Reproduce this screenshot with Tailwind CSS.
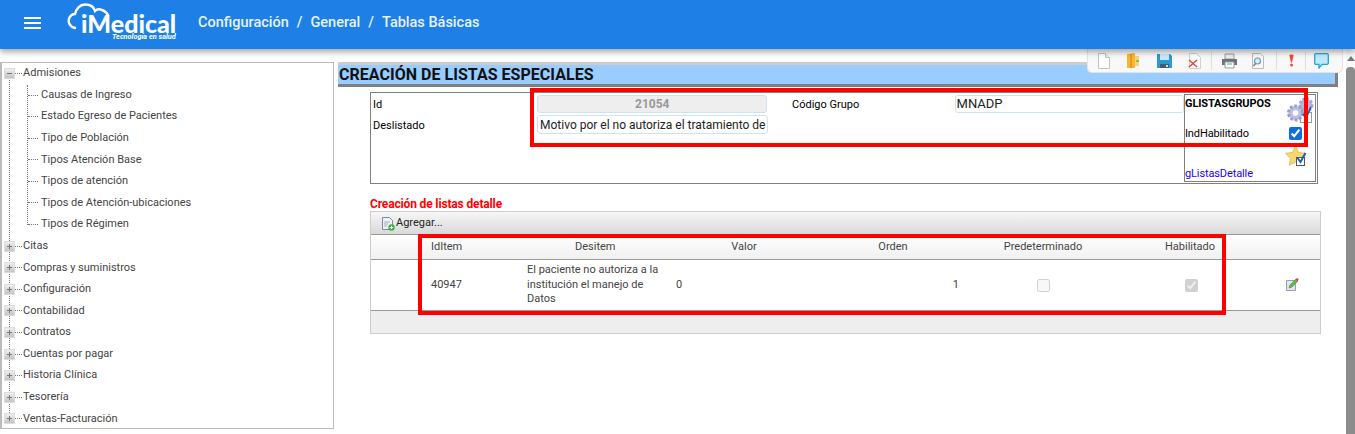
<!DOCTYPE html>
<html lang="es">
<head>
<meta charset="utf-8">
<title>iMedical</title>
<script src="https://cdn.jsdelivr.net/npm/@tailwindcss/browser@4"></script>
</head>
<body class="relative h-[434px] w-[1355px] overflow-hidden bg-white font-['Roboto',sans-serif] text-[11px] text-[#333]">
<header class="relative z-10 flex h-[49px] items-center bg-[#1e80e6] pb-[4px] text-white shadow-[0_3px_6px_rgba(0,0,0,0.35)]">
  <svg class="ml-[24px] h-[12px] w-[17px]" viewBox="0 0 17 12"><path d="M0 1h17M0 6h17M0 11h17" stroke="#fff" stroke-width="2"/></svg>
  <div class="relative -mb-[4px] ml-[26px] h-[49px] w-[114px]">
    <svg class="absolute left-0 top-[3px] h-[28px] w-[46px]" viewBox="0 0 46 28" fill="none"><path d="M8 25C3 24 1 20 2 16 3 13 5 11 8 11 9 6 13 1.500 18 1.500 23 1.500 27 4 28 8 30 6 33 6 35 7 38 8 40 10 41 12" stroke="#fff" stroke-width="2.400" stroke-linecap="round"/></svg>
    <span class="absolute left-[14px] top-[13px] font-['Lato',sans-serif] text-[25px] font-black leading-[20px]">iMedical</span>
    <span class="absolute left-[45px] top-[33px] whitespace-nowrap font-['Roboto',sans-serif] text-[7.3px] font-bold italic leading-[7px]">Tecnología en salud</span>
  </div>
  <nav class="ml-[17px] flex text-[14.5px] font-medium text-[#e8f2fd]">
    <span>Configuración</span><span class="mx-[8px]">/</span><span>General</span><span class="mx-[8px]">/</span><span>Tablas Básicas</span>
  </nav>
</header>

<div class="flex">
  <aside class="relative mt-[13px] h-[367px] w-[334px] border border-l-2 border-[#bbb] text-[#444]">
    <span class="absolute left-[7px] top-[10px] h-[346px] border-l border-dotted border-[#777]"></span>
    <span class="absolute left-[25px] top-[22px] h-[140px] border-l border-dotted border-[#777]"></span>
    <ul class="relative -mt-[0.4px]">
      <li class="flex h-[21.6px] items-center"><span class="ml-[2px] flex h-[11px] w-[11px] items-center justify-center border border-[#ddd] bg-linear-to-b from-[#eee] to-[#c4c4c4]"><span class="h-px w-[5px] bg-[#777]"></span></span><span class="h-0 w-[7px] border-t border-dotted border-[#777]"></span><span class="ml-[1px]">Admisiones</span></li>
      <li class="flex h-[21.6px] items-center pl-[26px]"><span class="w-[10px] border-t border-dotted border-[#777]"></span><span class="ml-[3px]">Causas de Ingreso</span></li>
      <li class="flex h-[21.6px] items-center pl-[26px]"><span class="w-[10px] border-t border-dotted border-[#777]"></span><span class="ml-[3px]">Estado Egreso de Pacientes</span></li>
      <li class="flex h-[21.6px] items-center pl-[26px]"><span class="w-[10px] border-t border-dotted border-[#777]"></span><span class="ml-[3px]">Tipo de Población</span></li>
      <li class="flex h-[21.6px] items-center pl-[26px]"><span class="w-[10px] border-t border-dotted border-[#777]"></span><span class="ml-[3px]">Tipos Atención Base</span></li>
      <li class="flex h-[21.6px] items-center pl-[26px]"><span class="w-[10px] border-t border-dotted border-[#777]"></span><span class="ml-[3px]">Tipos de atención</span></li>
      <li class="flex h-[21.6px] items-center pl-[26px]"><span class="w-[10px] border-t border-dotted border-[#777]"></span><span class="ml-[3px]">Tipos de Atención-ubicaciones</span></li>
      <li class="flex h-[21.6px] items-center pl-[26px]"><span class="w-[10px] border-t border-dotted border-[#777]"></span><span class="ml-[3px]">Tipos de Régimen</span></li>
      <li class="flex h-[21.6px] items-center"><span class="ml-[2px] flex h-[11px] w-[11px] items-center justify-center border border-[#ddd] bg-linear-to-b from-[#eee] to-[#c4c4c4]"><svg class="h-[5px] w-[5px]" viewBox="0 0 5 5"><path d="M0 2.500h5M2.500 0v5" stroke="#777"/></svg></span><span class="h-0 w-[7px] border-t border-dotted border-[#777]"></span><span class="ml-[1px]">Citas</span></li>
      <li class="flex h-[21.6px] items-center"><span class="ml-[2px] flex h-[11px] w-[11px] items-center justify-center border border-[#ddd] bg-linear-to-b from-[#eee] to-[#c4c4c4]"><svg class="h-[5px] w-[5px]" viewBox="0 0 5 5"><path d="M0 2.500h5M2.500 0v5" stroke="#777"/></svg></span><span class="h-0 w-[7px] border-t border-dotted border-[#777]"></span><span class="ml-[1px]">Compras y suministros</span></li>
      <li class="flex h-[21.6px] items-center"><span class="ml-[2px] flex h-[11px] w-[11px] items-center justify-center border border-[#ddd] bg-linear-to-b from-[#eee] to-[#c4c4c4]"><svg class="h-[5px] w-[5px]" viewBox="0 0 5 5"><path d="M0 2.500h5M2.500 0v5" stroke="#777"/></svg></span><span class="h-0 w-[7px] border-t border-dotted border-[#777]"></span><span class="ml-[1px]">Configuración</span></li>
      <li class="flex h-[21.6px] items-center"><span class="ml-[2px] flex h-[11px] w-[11px] items-center justify-center border border-[#ddd] bg-linear-to-b from-[#eee] to-[#c4c4c4]"><svg class="h-[5px] w-[5px]" viewBox="0 0 5 5"><path d="M0 2.500h5M2.500 0v5" stroke="#777"/></svg></span><span class="h-0 w-[7px] border-t border-dotted border-[#777]"></span><span class="ml-[1px]">Contabilidad</span></li>
      <li class="flex h-[21.6px] items-center"><span class="ml-[2px] flex h-[11px] w-[11px] items-center justify-center border border-[#ddd] bg-linear-to-b from-[#eee] to-[#c4c4c4]"><svg class="h-[5px] w-[5px]" viewBox="0 0 5 5"><path d="M0 2.500h5M2.500 0v5" stroke="#777"/></svg></span><span class="h-0 w-[7px] border-t border-dotted border-[#777]"></span><span class="ml-[1px]">Contratos</span></li>
      <li class="flex h-[21.6px] items-center"><span class="ml-[2px] flex h-[11px] w-[11px] items-center justify-center border border-[#ddd] bg-linear-to-b from-[#eee] to-[#c4c4c4]"><svg class="h-[5px] w-[5px]" viewBox="0 0 5 5"><path d="M0 2.500h5M2.500 0v5" stroke="#777"/></svg></span><span class="h-0 w-[7px] border-t border-dotted border-[#777]"></span><span class="ml-[1px]">Cuentas por pagar</span></li>
      <li class="flex h-[21.6px] items-center"><span class="ml-[2px] flex h-[11px] w-[11px] items-center justify-center border border-[#ddd] bg-linear-to-b from-[#eee] to-[#c4c4c4]"><svg class="h-[5px] w-[5px]" viewBox="0 0 5 5"><path d="M0 2.500h5M2.500 0v5" stroke="#777"/></svg></span><span class="h-0 w-[7px] border-t border-dotted border-[#777]"></span><span class="ml-[1px]">Historia Clínica</span></li>
      <li class="flex h-[21.6px] items-center"><span class="ml-[2px] flex h-[11px] w-[11px] items-center justify-center border border-[#ddd] bg-linear-to-b from-[#eee] to-[#c4c4c4]"><svg class="h-[5px] w-[5px]" viewBox="0 0 5 5"><path d="M0 2.500h5M2.500 0v5" stroke="#777"/></svg></span><span class="h-0 w-[7px] border-t border-dotted border-[#777]"></span><span class="ml-[1px]">Tesorería</span></li>
      <li class="flex h-[21.6px] items-center"><span class="ml-[2px] flex h-[11px] w-[11px] items-center justify-center border border-[#ddd] bg-linear-to-b from-[#eee] to-[#c4c4c4]"><svg class="h-[5px] w-[5px]" viewBox="0 0 5 5"><path d="M0 2.500h5M2.500 0v5" stroke="#777"/></svg></span><span class="h-0 w-[7px] border-t border-dotted border-[#777]"></span><span class="ml-[1px]">Ventas-Facturación</span></li>
    </ul>
  </aside>

  <main class="ml-[4px] w-[1000px] pt-[13px]">
    <h1 class="flex h-[25px] w-[1000px] items-center border-t-[3px] border-b-[3px] border-r-[3px] border-t-[#ccc] border-b-[#808080] border-r-[#808080] bg-[#99ccff] pl-[1px] text-[16px] font-bold leading-none tracking-[0.03px] text-[#111]">CREACIÓN DE LISTAS ESPECIALES</h1>

    <section class="ml-[32px] mt-[5px] flex h-[92px] w-[948px] border border-[#808080] text-black">
      <div class="w-[813px]">
        <div class="flex h-[22px] items-center pl-[2px]">
          <label class="w-[164px] pt-[2px]">Id</label>
          <input class="h-[18px] w-[231px] rounded-[3px] border border-[#cde3f2] bg-[#eee] pl-[1px] text-center text-[12px] font-bold text-[#999]" value="21054" readonly>
          <label class="ml-[25px] w-[163px] pt-[2px]">Código Grupo</label>
          <input class="h-[18px] w-[230px] rounded-[3px] border border-[#cde3f2] bg-white pl-[1px] text-[13px] text-[#222]" value="MNADP">
        </div>
        <div class="flex h-[19px] items-center pl-[2px]">
          <label class="w-[164px] pt-[4px]">Deslistado</label>
          <input class="h-[19px] w-[231px] rounded-[3px] border border-[#cde3f2] bg-white pl-[2px] text-[12px] text-[#222]" value="Motivo por el no autoriza el tratamiento de">
        </div>
      </div>
      <div class="relative my-[1px] w-[132px] border border-[#808080] tracking-[-0.12px]">
        <p class="mt-[2px] font-bold leading-[13px] text-black">GLISTASGRUPOS</p>
        <div class="mt-[17px] flex items-center justify-between pr-[13px] leading-[13px]"><span>IndHabilitado</span><input type="checkbox" checked class="h-[13px] w-[13px] accent-[#0f6fd6]"></div>
        <p class="mt-[27px] leading-[13px] text-[#2200ff]">gListasDetalle</p>
        <svg class="absolute left-[101px] top-[2px] h-[27px] w-[28px]" viewBox="0 0 28 27">
          <circle cx="20" cy="8" r="6" fill="#b4b7de" stroke="#a0a4d2" stroke-width="3" stroke-dasharray="2.500 1.500"/><circle cx="20" cy="8" r="2" fill="#eeeef8"/>
          <rect x="14.500" y="15.500" width="11" height="10" fill="#fff" stroke="#999"/>
          <circle cx="9.500" cy="16" r="7" fill="#bcc0e4" stroke="#9a9ecc" stroke-width="3" stroke-dasharray="2.800 1.700"/><circle cx="9.500" cy="16" r="2.800" fill="#fff"/>
          <path d="M17 17l3 4 5-11" fill="none" stroke="#1560bd" stroke-width="1.800"/>
        </svg>
        <svg class="absolute left-[100px] top-[50px] h-[22px] w-[22px]" viewBox="0 0 22 22">
          <path d="M10.500 1l3 6.500 7 .8-5 5 1.300 7-6.300-3.300-6.300 3.300 1.300-7-5-5 7-.8z" fill="#f6d86c" stroke="#e0c070"/>
          <rect x="11.500" y="12.500" width="8" height="8" fill="#fff" stroke="#555"/>
          <path d="M12.500 13l3 4 5-9" fill="none" stroke="#1560bd" stroke-width="2"/>
        </svg>
      </div>
    </section>

    <h2 class="ml-[32px] mt-[13px] h-[14px] text-[12px] font-bold leading-[14px] tracking-[-0.15px] text-[#f00]">Creación de listas detalle</h2>

    <section class="ml-[32px] w-[951px] border border-[#ccc]">
      <div class="flex h-[23px] items-center border-b border-[#999] bg-linear-to-b from-[#f7f7f7] to-[#d9d9d9] pl-[10px] text-[#222]">
        <svg class="h-[15px] w-[14px]" viewBox="0 0 14 15"><path d="M1.500 1.500h7l3 3v9h-10z" fill="#eef1f6" stroke="#7b8aa0"/><path d="M3 6h6M3 8h4M3 10h3" stroke="#9fb0c4"/><circle cx="10.500" cy="11.500" r="3.200" fill="#3fae3f"/><path d="M8.800 11.500h3.400M10.500 9.800v3.400" stroke="#fff"/></svg>
        <span class="ml-[1px]">Agregar...</span>
      </div>
      <div class="grid h-[25px] grid-cols-[60px_96px_149px_136px_162px_138px_156px_53px] items-center border-b border-[#999] bg-linear-to-b from-white to-[#f0f0f0] text-[#444]">
        <span></span><span>IdItem</span><span class="pl-[48px]">Desitem</span><span class="text-center">Valor</span><span class="text-center">Orden</span><span class="text-center">Predeterminado</span><span class="pt-[1px] text-center">Habilitado</span><span></span>
      </div>
      <div class="grid h-[51px] grid-cols-[60px_96px_149px_136px_162px_138px_156px_53px] items-center border-b border-[#999] text-[#444]">
        <span></span><span>40947</span><span class="w-[140px] leading-[14.5px]">El paciente no autoriza a la institución el manejo de Datos</span><span>0</span><span class="pr-[15px] text-right">1</span>
        <span class="flex justify-center"><input type="checkbox" disabled class="h-[13px] w-[13px]"></span>
        <span class="flex justify-center pl-[2px]"><input type="checkbox" checked disabled class="h-[13px] w-[13px]"></span>
        <span class="flex justify-center pr-[6px]"><svg class="h-[14px] w-[14px]" viewBox="0 0 14 14"><path d="M1.500 2.500h9v10h-9z" fill="#e4e4ee" stroke="#9a9ab0"/><path d="M4 10l1-3 6-6 2 2-6 6z" fill="#5cbf4a" stroke="#3e8f35" stroke-width=".6"/><circle cx="12.200" cy="1.600" r="1.300" fill="#e04040"/></svg></span>
      </div>
      <div class="h-[22px] bg-[#eee]"></div>
    </section>
  </main>
</div>

<!-- toolbar floating over the content, under the header's shadow -->
<div class="absolute left-[1087px] top-[49px] z-[5] flex h-[24px] w-[256px] items-center rounded-b-[5px] border border-t-0 border-[#e4e4e4] bg-[#f8f8f8] pl-[9px]">
  <svg class="h-[16px] w-[14px]" viewBox="0 0 14 16"><path d="M1.500.5h7l4 4v11h-11z" fill="#fff" stroke="#c4c4c4"/><path d="M8.500.5v4h4" fill="#eee" stroke="#c4c4c4"/></svg>
  <svg class="ml-[15px] h-[16px] w-[14px]" viewBox="0 0 14 16"><path d="M1 1l8-1v15H1z" fill="#f7b733"/><path d="M9 3h4v10H9z" fill="#fbd27a"/><path d="M5 1v14" stroke="#ea9a24" stroke-width="2"/><path d="M10 8h3" stroke="#8cbf3f" stroke-width="2"/></svg>
  <svg class="ml-[17px] h-[16px] w-[15px]" viewBox="0 0 15 16"><path d="M0 1h13l2 2v12H0z" fill="#2a9ad0"/><path d="M3 1h9v6H3z" fill="#c8e8f6"/><path d="M3 11h9v4H3z" fill="#4a5a6a"/><path d="M9 12h2v2H9z" fill="#cde"/></svg>
  <svg class="ml-[15px] h-[16px] w-[14px]" viewBox="0 0 14 16"><path d="M2.500.5h7l4 4v11h-11z" fill="#fff" stroke="#d0d0d0"/><path d="M2 7l8 7M10 7l-8 7" stroke="#e2483f" stroke-width="1.500"/></svg>
  <span class="ml-[10px] h-[18px] w-px bg-[#ddd]"></span>
  <svg class="ml-[10px] h-[16px] w-[15px]" viewBox="0 0 15 16"><path d="M3 1h9v5H3z" fill="#eee" stroke="#999"/><path d="M0 6h15v6H0z" fill="#6b7278"/><path d="M3 9h9v6H3z" fill="#fff" stroke="#999"/><path d="M5 11h5" stroke="#3cb878"/></svg>
  <svg class="ml-[14px] h-[16px] w-[14px]" viewBox="0 0 14 16"><path d="M1.500.5h8l3 3v12h-11z" fill="#f7f7f7" stroke="#bbb"/><circle cx="6.500" cy="8" r="3" fill="#d7ecf8" stroke="#6f9ab5" stroke-width="1.200"/><path d="M4.500 10.500L2.500 13" stroke="#6f7f8a" stroke-width="1.400"/></svg>
  <span class="ml-[11px] h-[18px] w-px bg-[#ddd]"></span>
  <svg class="ml-[12px] h-[13px] w-[5px]" viewBox="0 0 5 13"><path d="M.4 1.500C.4.3 4.600.3 4.600 1.500L3 8.500H2z" fill="#f2493c"/><circle cx="2.500" cy="11" r="1.500" fill="#f2493c"/></svg>
  <span class="ml-[11px] h-[18px] w-px bg-[#ddd]"></span>
  <svg class="ml-[8px] h-[16px] w-[15px]" viewBox="0 0 15 16"><path d="M2 .7h11c.8 0 1.300.5 1.300 1.300v8c0 .8-.5 1.300-1.300 1.300H8L5 15v-3.700H2C1.200 11.300.7 10.800.7 10V2C.7 1.200 1.200.7 2 .7z" fill="#bfe8fa" stroke="#22a7dd" stroke-width="1.300"/></svg>
</div>

<!-- page scrollbar -->
<div class="absolute right-0 top-[49px] z-0 flex h-[385px] w-[9px] flex-col items-center bg-[#f8f8f8]">
  <span class="mt-[7px] h-0 w-0 border-x-[4px] border-b-[5px] border-x-transparent border-b-[#777]"></span>
  <span class="mt-[6px] w-full flex-1 rounded-t-[4px] bg-[#8c8c8c]"></span>
</div>

<!-- annotation rectangles drawn over the screenshot -->
<div class="absolute left-[530px] top-[88px] z-30 h-[59px] w-[778px] border-[4px] border-[#f00]"></div>
<div class="absolute left-[418px] top-[234px] z-30 h-[81px] w-[808px] border-[4px] border-[#f00]"></div>
</body>
</html>
